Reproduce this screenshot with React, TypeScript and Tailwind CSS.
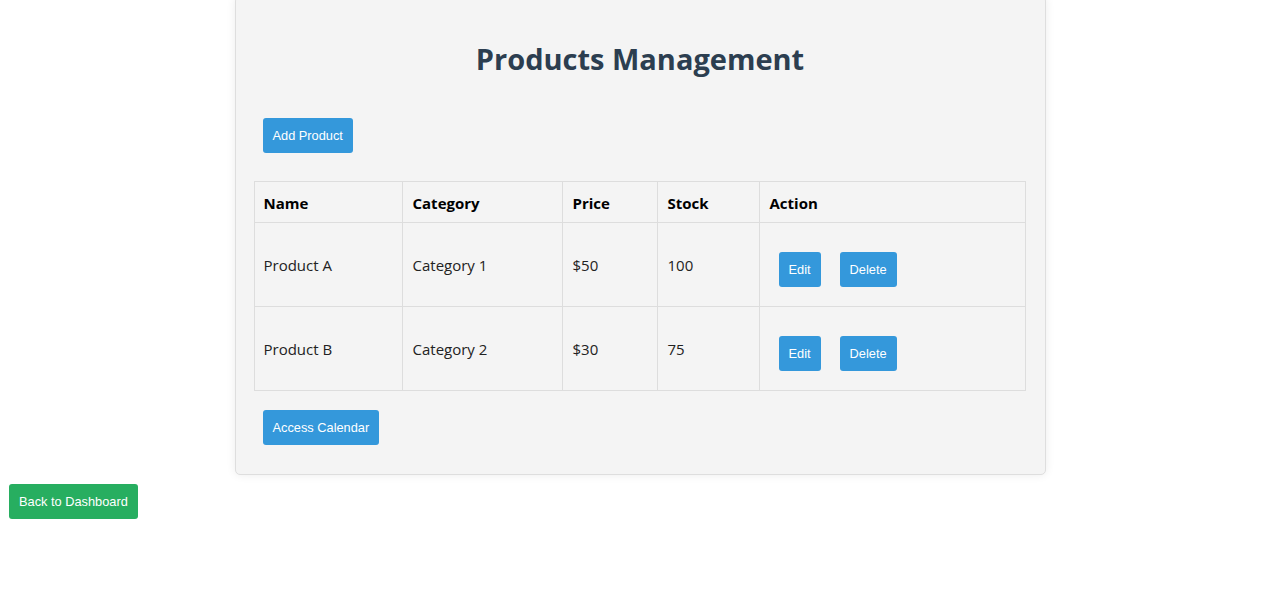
const products = [
  { name: "Product A", category: "Category 1", price: "$50", stock: 100 },
  { name: "Product B", category: "Category 2", price: "$30", stock: 75 },
];

const btn =
  "bg-[#3498db] text-white text-[12.8px] leading-[15px] px-[10px] py-[10px] rounded-[3px] font-['Liberation_Sans',Arial,sans-serif]";

export default function App() {
  return (
    <div className="min-h-[606px] bg-white font-['Open_Sans','Noto_Sans',sans-serif]">
      <div className="mx-auto -mt-[4px] w-[811px] rounded-[5px] border border-[#dedede] bg-[#f4f4f4] px-[18px] pt-[42px] pb-[29px] shadow-[0_0_10px_rgba(0,0,0,0.08)]">
        <h1 className="text-center text-[29px] leading-[40px] font-bold text-[#2c3e50]">
          Products Management
        </h1>
        <div className="mt-[39px] ml-[9px]">
          <button className={btn}>Add Product</button>
        </div>
        <table className="mt-[28px] w-[772px] border-collapse text-[15px] text-[#222]">
          <thead>
            <tr className="h-[41px]">
              <th className="w-[148px] border border-[#ddd] px-[9px] pt-[2px] text-left font-bold text-black">Name</th>
              <th className="w-[160px] border border-[#ddd] px-[10px] pt-[2px] text-left font-bold text-black">Category</th>
              <th className="w-[95px] border border-[#ddd] px-[10px] pt-[2px] text-left font-bold text-black">Price</th>
              <th className="w-[102px] border border-[#ddd] px-[10px] pt-[2px] text-left font-bold text-black">Stock</th>
              <th className="border border-[#ddd] px-[10px] pt-[2px] text-left font-bold text-black">Action</th>
            </tr>
          </thead>
          <tbody>
            {products.map((p) => (
              <tr key={p.name} className="h-[84px]">
                <td className="border border-[#ddd] px-[9px] pt-[2px]">{p.name}</td>
                <td className="border border-[#ddd] px-[10px] pt-[2px]">{p.category}</td>
                <td className="border border-[#ddd] px-[10px] pt-[2px]">{p.price}</td>
                <td className="border border-[#ddd] px-[10px] pt-[2px]">{p.stock}</td>
                <td className="border border-[#ddd] px-[10px] pt-[9px]">
                  <div className="flex items-center pl-[9px]">
                    <button className={btn}>Edit</button>
                    <button className={`${btn} ml-[19px]`}>Delete</button>
                  </div>
                </td>
              </tr>
            ))}
          </tbody>
        </table>
        <div className="mt-[19px] ml-[9px]">
          <button className={btn}>Access Calendar</button>
        </div>
      </div>
      <div className="mt-[9px] ml-[9px]">
        <button className="bg-[#27ae60] text-white text-[12.8px] leading-[15px] px-[10px] py-[10px] rounded-[3px] font-['Liberation_Sans',Arial,sans-serif]">
          Back to Dashboard
        </button>
      </div>
    </div>
  );
}
